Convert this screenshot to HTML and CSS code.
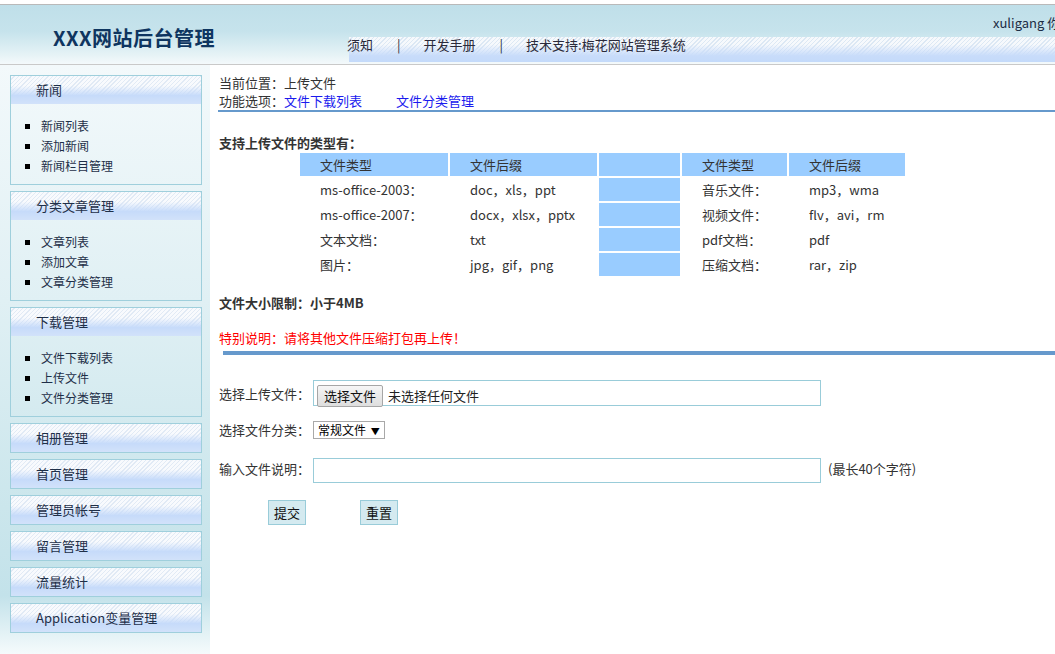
FILE: index.html
```html
<!DOCTYPE html>
<html lang="zh-CN">
<head>
    <meta charset="UTF-8">
    <title>XXX网站后台管理</title>
    <link rel="stylesheet" href="styles.css">
</head>
<body>

<div class="header">
    <div class="logo">XXX网站后台管理</div>
    <div class="header-right">
        <div class="user">xuligang 你好</div>
        <div class="navbar">
            <span>须知</span><span class="sep">|</span><span>开发手册</span><span class="sep">|</span><span>技术支持:梅花网站管理系统</span>
        </div>
    </div>
</div>

<div class="page">
    <div class="sidebar">
        <div class="menu">
            <div class="menu-title">新闻</div>
            <ul class="menu-list">
                <li>新闻列表</li>
                <li>添加新闻</li>
                <li>新闻栏目管理</li>
            </ul>
        </div>
        <div class="menu">
            <div class="menu-title">分类文章管理</div>
            <ul class="menu-list">
                <li>文章列表</li>
                <li>添加文章</li>
                <li>文章分类管理</li>
            </ul>
        </div>
        <div class="menu">
            <div class="menu-title">下载管理</div>
            <ul class="menu-list">
                <li>文件下载列表</li>
                <li>上传文件</li>
                <li>文件分类管理</li>
            </ul>
        </div>
        <div class="menu"><div class="menu-title">相册管理</div></div>
        <div class="menu"><div class="menu-title">首页管理</div></div>
        <div class="menu"><div class="menu-title">管理员帐号</div></div>
        <div class="menu"><div class="menu-title">留言管理</div></div>
        <div class="menu"><div class="menu-title">流量统计</div></div>
        <div class="menu"><div class="menu-title">Application变量管理</div></div>
    </div>

    <div class="content">
        <div class="crumbs">
            <div>当前位置：上传文件</div>
            <div>功能选项：<a href="#">文件下载列表</a><a href="#" class="second">文件分类管理</a></div>
        </div>

        <div class="section-title">支持上传文件的类型有：</div>
        <table class="types">
            <tr class="head">
                <td class="c1">文件类型</td>
                <td class="c2">文件后缀</td>
                <td class="c3"></td>
                <td class="c4">文件类型</td>
                <td class="c5">文件后缀</td>
            </tr>
            <tr>
                <td>ms-office-2003：</td>
                <td>doc，xls，ppt</td>
                <td class="blue"></td>
                <td>音乐文件：</td>
                <td>mp3，wma</td>
            </tr>
            <tr>
                <td>ms-office-2007：</td>
                <td>docx，xlsx，pptx</td>
                <td class="blue"></td>
                <td>视频文件：</td>
                <td>flv，avi，rm</td>
            </tr>
            <tr>
                <td>文本文档：</td>
                <td>txt</td>
                <td class="blue"></td>
                <td>pdf文档：</td>
                <td>pdf</td>
            </tr>
            <tr>
                <td>图片：</td>
                <td>jpg，gif，png</td>
                <td class="blue"></td>
                <td>压缩文档：</td>
                <td>rar，zip</td>
            </tr>
        </table>

        <div class="size-limit">文件大小限制：小于4MB</div>
        <div class="notice">特别说明：请将其他文件压缩打包再上传！</div>
        <div class="divider"></div>

        <div class="form">
            <div class="form-row row-file">
                <label>选择上传文件：</label>
                <div class="filebox">
                    <span class="file-btn">选择文件</span>
                    <span class="file-name">未选择任何文件</span>
                </div>
            </div>
            <div class="form-row row-select">
                <label>选择文件分类：</label>
                <span class="select">常规文件 <span class="arrow">▼</span></span>
            </div>
            <div class="form-row row-desc">
                <label>输入文件说明：</label>
                <input type="text" class="text-input">
                <span class="hint">(最长40个字符)</span>
            </div>
            <div class="buttons">
                <button type="button">提交</button>
                <button type="button">重置</button>
            </div>
        </div>
    </div>
</div>

</body>
</html>
```

FILE: styles.css
```css
body {
    margin: 0;
    padding-top: 4px;
    font-family: "Noto Sans CJK SC", "Noto Sans", sans-serif;
    font-size: 13px;
    color: #333;
    background: #fff;
    overflow: hidden;
}

/* header */
.header {
    display: flex;
    height: 59px;
    border-top: 1px solid #b9b9b9;
    border-bottom: 1px solid #c9c9c9;
    background: linear-gradient(to bottom, #bfdfe9 0%, #c6e3ec 45%, #e6f3f6 85%, #f4f9fb 100%);
}

.logo {
    width: 294px;
    padding: 19px 0 0 53px;
    font-size: 20px;
    font-weight: bold;
    letter-spacing: 0.5px;
    color: #0e3560;
    line-height: 28px;
}

.header-right {
    flex: 1;
    display: flex;
    flex-direction: column;
    min-width: 0;
}

.user {
    flex: 1;
    padding: 10px 0 0 646px;
    white-space: nowrap;
    overflow: hidden;
    line-height: 16px;
    color: #1c2c44;
}

.navbar {
    height: 25px;
    margin-bottom: 2px;
    margin-left: 2px;
    line-height: 15px;
    white-space: nowrap;
    color: #2a2a3a;
    background:
        linear-gradient(to bottom, rgba(200, 220, 250, 0) 30%, #c8dcfa 75%, #c4dafa 100%),
        repeating-linear-gradient(135deg, #f6f9fc 0px, #f6f9fc 2px, #dce8f4 2px, #dce8f4 3px);
}

.navbar span:first-child {
    margin-left: -2px;
}

.navbar .sep {
    margin: 0 23px 0 24px;
}

/* layout */
.page {
    display: flex;
    height: 590px;
}

.sidebar {
    width: 192px;
    padding: 10px 8px 0 10px;
    background: linear-gradient(to bottom, #f3f9fb 0%, #e0f0f4 40%, #cbe6ec 75%, #c3e2ea 90%, #f6fbfc 100%);
}

.menu {
    border: 1px solid #9fcfdc;
    margin-bottom: 6px;
}

.menu-title {
    height: 28px;
    line-height: 27px;
    padding-left: 25px;
    color: #1e2f48;
    background:
        linear-gradient(to bottom, rgba(198, 220, 250, 0) 35%, #c6dbfa 70%, #d2e2fa 100%),
        repeating-linear-gradient(135deg, #f8fafd 0px, #f8fafd 2px, #e1eaf5 2px, #e1eaf5 3px);
}

.menu-list {
    margin: 0;
    padding: 12px 0 8px 30px;
    list-style: square;
    font-size: 12px;
    line-height: 20px;
    color: #1e2f48;
}

.menu-list li::marker {
    color: #000;
}

/* content */
.content {
    flex: 1;
    padding: 9px 0 0 9px;
    min-width: 0;
}

.crumbs {
    line-height: 18px;
    border-bottom: 2px solid #6699cc;
    margin-left: -1px;
    padding-left: 1px;
}

.crumbs a {
    color: #1a1aee;
    text-decoration: none;
}

.crumbs a.second {
    margin-left: 34px;
}

.section-title {
    margin-top: 22px;
    line-height: 18px;
    font-weight: bold;
}

.types {
    margin: -1px 0 0 79px;
    border-spacing: 2px;
    font-size: 13px;
    color: #333;
}

.types td {
    height: 23px;
    padding: 0 0 0 20px;
    line-height: 23px;
    white-space: nowrap;
}

.types .head td {
    background: #99ccff;
}

.types .c1 { width: 128px; }
.types .c2 { width: 127px; }
.types .c3 { width: 61px; }
.types .c4 { width: 85px; }
.types .c5 { width: 96px; }

.types td.blue {
    background: #99ccff;
}

.size-limit {
    margin-top: 16px;
    line-height: 18px;
    font-weight: bold;
}

.notice {
    margin-top: 17px;
    line-height: 18px;
    color: #ff0000;
}

.divider {
    height: 4px;
    margin: 4px 0 0 4px;
    background: #6699cc;
}

/* form */
.form {
    padding-top: 25px;
}

.form-row {
    display: flex;
    align-items: center;
}

.form-row label {
    width: 94px;
}

.filebox {
    box-sizing: border-box;
    width: 508px;
    height: 26px;
    border: 1px solid #99ccd9;
    display: flex;
    align-items: center;
    padding-left: 3px;
}

.file-btn {
    box-sizing: border-box;
    height: 22px;
    line-height: 20px;
    padding: 0 6px;
    margin-top: 5px;
    border: 1px solid #a6a6a6;
    border-radius: 2px;
    background: linear-gradient(to bottom, #f6f6f6, #dedede);
    color: #111;
}

.file-name {
    margin-left: 5px;
    margin-top: 4px;
    color: #222;
}

.row-select {
    margin-top: 14px;
}

.select {
    box-sizing: border-box;
    height: 18px;
    width: 72px;
    line-height: 16px;
    padding-left: 4px;
    border: 1px solid #a9a9a9;
    font-size: 12px;
    color: #000;
    background: #fff;
}

.select .arrow {
    font-size: 9px;
    margin-left: 2px;
}

.row-desc {
    margin-top: 19px;
}

.row-desc label {
    margin-top: -4px;
}

.text-input {
    box-sizing: border-box;
    width: 508px;
    height: 25px;
    margin: 0;
    border: 1px solid #99ccd9;
    outline: none;
}

.hint {
    margin-left: 7px;
    margin-top: -4px;
}

.buttons {
    display: flex;
    gap: 54px;
    margin: 17px 0 0 49px;
}

.buttons button {
    box-sizing: border-box;
    width: 38px;
    height: 25px;
    padding: 0;
    border: 1px solid #99ccd9;
    background: #d4eaf0;
    font-family: inherit;
    font-size: 13px;
    color: #111;
}
```
